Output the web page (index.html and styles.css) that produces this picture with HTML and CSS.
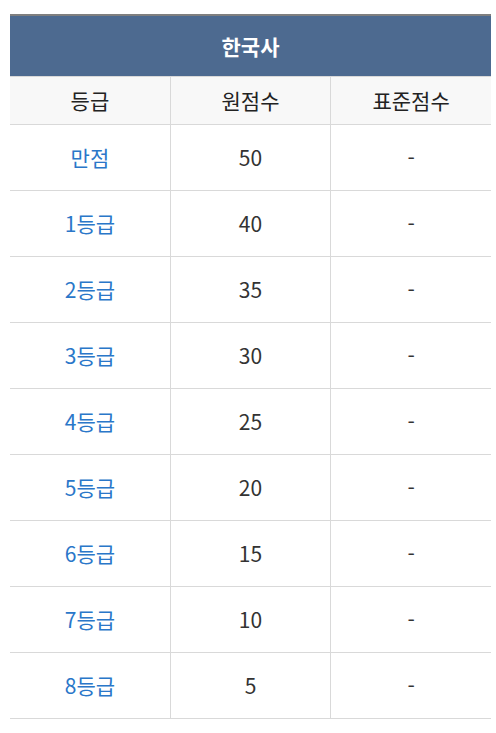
FILE: index.html
```html
<!DOCTYPE html>
<html lang="ko">
<head>
<meta charset="utf-8">
<link rel="stylesheet" href="styles.css">
</head>
<body>
<table class="score">
  <thead>
    <tr><th class="title" colspan="3">한국사</th></tr>
    <tr class="sub"><th>등급</th><th>원점수</th><th>표준점수</th></tr>
  </thead>
  <tbody>
    <tr><td class="grade">만점</td><td>50</td><td>-</td></tr>
    <tr><td class="grade">1등급</td><td>40</td><td>-</td></tr>
    <tr><td class="grade">2등급</td><td>35</td><td>-</td></tr>
    <tr><td class="grade">3등급</td><td>30</td><td>-</td></tr>
    <tr><td class="grade">4등급</td><td>25</td><td>-</td></tr>
    <tr><td class="grade">5등급</td><td>20</td><td>-</td></tr>
    <tr><td class="grade">6등급</td><td>15</td><td>-</td></tr>
    <tr><td class="grade">7등급</td><td>10</td><td>-</td></tr>
    <tr><td class="grade">8등급</td><td>5</td><td>-</td></tr>
  </tbody>
</table>
</body>
</html>
```
FILE: styles.css
```css
html, body {
  margin: 0;
  padding: 0;
  background: #fff;
}
body {
  padding: 14px 6px 0 10px;
  font-family: "Noto Sans CJK KR", "Noto Sans", sans-serif;
  font-size: 21px;
  color: #333;
}
.score {
  width: 481px;
  border-collapse: collapse;
  table-layout: fixed;
  border-top: 2px solid #7f7f7f;
}
.score th, .score td {
  padding: 0;
  text-align: center;
  vertical-align: middle;
  font-weight: normal;
  line-height: 1;
}
.title {
  background: #4d6a90;
  color: #fff;
  font-weight: bold !important;
  font-size: 21px;
  height: 60px;
  border-bottom: 1px solid #d9d9d9;
}
.sub th {
  background: #f8f8f8;
  height: 47px;
  border-bottom: 1px solid #d9d9d9;
  color: #222;
}
.sub th + th, .score td + td {
  border-left: 1px solid #d9d9d9;
}
.score td {
  height: 65px;
  border-bottom: 1px solid #d9d9d9;
}
.grade {
  color: #2a77c9;
}
```
